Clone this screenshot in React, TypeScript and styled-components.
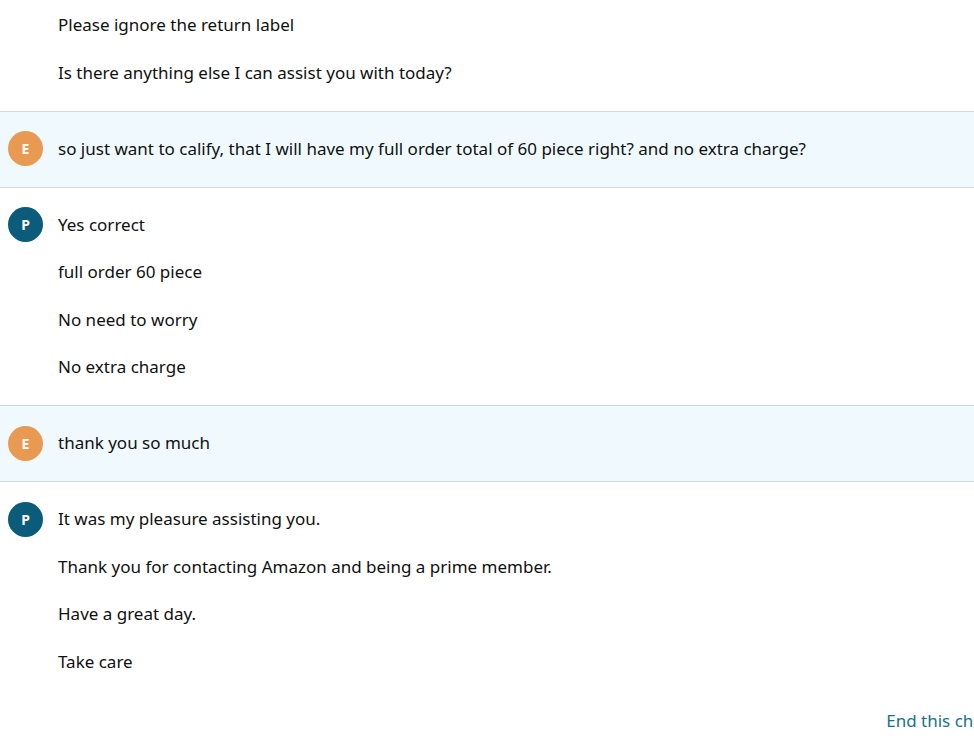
import * as React from 'react'
import styled, { createGlobalStyle } from 'styled-components'

const GlobalStyle = createGlobalStyle`
  html, body {
    margin: 0;
    padding: 0;
    background: #ffffff;
    overflow: hidden;
  }
  body {
    font-family: "Noto Sans", "Open Sans", sans-serif;
    color: #0f1111;
  }
`

const Transcript = styled.div`
  width: 1000px;
  margin-top: -12px;
  display: flex;
  flex-direction: column;
`

const Turn = styled.div<{ customer: boolean; divided: boolean }>`
  display: flex;
  flex-direction: row;
  align-items: flex-start;
  gap: 15px;
  padding: 25px 0 26px 8px;
  background: ${p => (p.customer ? '#f0fafe' : '#ffffff')};
  border-bottom: ${p => (p.divided ? '1px solid #d5d9d9' : 'none')};
`

const Avatar = styled.div<{ customer: boolean }>`
  flex: 0 0 35px;
  width: 35px;
  height: 35px;
  margin: -5.5px 0;
  border-radius: 50%;
  background: ${p => (p.customer ? '#e99a52' : '#0b5b7a')};
  color: #ffffff;
  font-size: 14px;
  font-weight: 700;
  display: flex;
  align-items: center;
  justify-content: center;
`

const Spacer = styled.div`
  flex: 0 0 35px;
`

const Lines = styled.div`
  display: flex;
  flex-direction: column;
  gap: 23.5px;
`

const Line = styled.p`
  margin: 0;
  font-size: 17px;
  line-height: 24px;
`

const Footer = styled.div`
  display: flex;
  justify-content: flex-end;
  padding: 9px 11px 0 0;
`

const EndLink = styled.a`
  font-size: 17px;
  line-height: 24px;
  color: #16728a;
  text-decoration: none;
  cursor: pointer;
`

interface Message {
  who: 'E' | 'P' | null
  lines: string[]
}

const messages: Message[] = [
  {
    who: null,
    lines: ['Please ignore the return label', 'Is there anything else I can assist you with today?'],
  },
  {
    who: 'E',
    lines: ['so just want to calify, that I will have my full order total of 60 piece right? and no extra charge?'],
  },
  {
    who: 'P',
    lines: ['Yes correct', 'full order 60 piece', 'No need to worry', 'No extra charge'],
  },
  { who: 'E', lines: ['thank you so much'] },
  {
    who: 'P',
    lines: [
      'It was my pleasure assisting you.',
      'Thank you for contacting Amazon and being a prime member.',
      'Have a great day.',
      'Take care',
    ],
  },
]

const App: React.FC = () => {
  return (
    <>
      <GlobalStyle />
      <Transcript>
        {messages.map((m, i) => (
          <Turn customer={m.who === 'E'} divided={i < messages.length - 1} key={i}>
            {m.who ? <Avatar customer={m.who === 'E'}>{m.who}</Avatar> : <Spacer />}
            <Lines>
              {m.lines.map((l, j) => (
                <Line key={j}>{l}</Line>
              ))}
            </Lines>
          </Turn>
        ))}
        <Footer>
          <EndLink>End this chat</EndLink>
        </Footer>
      </Transcript>
    </>
  )
}

export default App
